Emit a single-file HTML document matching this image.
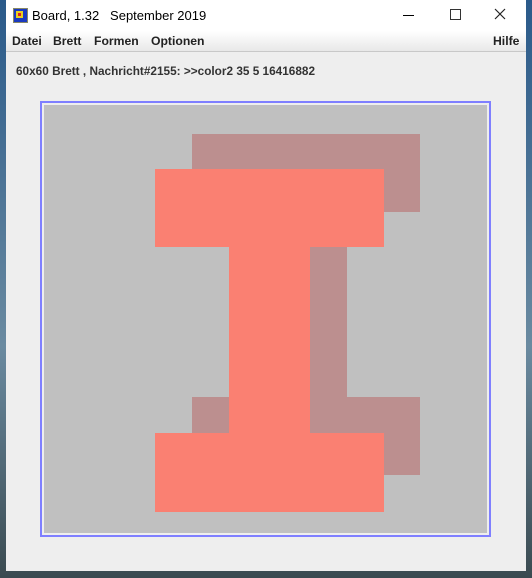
<!DOCTYPE html>
<html><head><style>
body{margin:0;width:532px;height:578px;overflow:hidden;background:linear-gradient(#2a5a8a,#6a8aa0 60%,#3a4a50);position:relative;font-family:"Liberation Sans",sans-serif}
.win{position:absolute;left:6px;top:0;width:520px;height:571px;background:#eeeeee;}
.title{position:absolute;left:0;top:0;width:520px;height:31px;background:#fff;font-size:13px;}
.menu{position:absolute;left:0;top:31px;width:520px;height:20px;background:linear-gradient(#ffffff,#e8e8e8);border-bottom:1px solid #c8c8c8;font-size:12.2px;font-weight:bold;color:#222}
.menu span{position:absolute;top:3px}
.abs{position:absolute}
</style></head><body>
<div class="win">
<div class="title">
 <div class="abs" style="left:7px;top:8px;width:13px;height:13px;background:#1a3ac0;border:1px solid #886"></div>
 <div class="abs" style="left:10px;top:11px;width:7px;height:7px;background:#e8d020"></div>
 <div class="abs" style="left:12px;top:13px;width:3px;height:3px;background:#e02020"></div>
 <div class="abs" style="left:26px;top:8px;color:#000">Board, 1.32&nbsp;&nbsp;&nbsp;September 2019</div>
 <div class="abs" style="left:397px;top:15px;width:11px;height:1px;background:#000"></div>
 <div class="abs" style="left:444px;top:9px;width:9px;height:9px;border:1px solid #333"></div>
 <svg class="abs" style="left:488px;top:8px" width="12" height="12"><path d="M1 1L11 11M11 1L1 11" stroke="#222" stroke-width="1.2"/></svg>
</div>
<div class="menu">
 <span style="left:6px">Datei</span><span style="left:47px">Brett</span><span style="left:88px">Formen</span><span style="left:145px">Optionen</span><span style="left:487px">Hilfe</span>
</div>
<div class="abs" style="left:10px;top:64px;font-size:11.8px;font-weight:bold;color:#333">60x60 Brett , Nachricht#2155: &gt;&gt;color2 35 5 16416882</div>
<div class="abs" style="left:34px;top:101px;width:447px;height:432px;border:2px solid #7f7fff;background:#eeeeee">
 <div class="abs" style="left:2px;top:2px;width:443px;height:428px;background:#c0c0c0;overflow:hidden">
  <div class="abs" style="left:148px;top:29px;width:228px;height:78px;background:#bc8f8f"></div>
  <div class="abs" style="left:222px;top:107px;width:81px;height:186px;background:#bc8f8f"></div>
  <div class="abs" style="left:148px;top:292px;width:228px;height:78px;background:#bc8f8f"></div>
  <div class="abs" style="left:111px;top:64px;width:229px;height:78px;background:#fa8072"></div>
  <div class="abs" style="left:185px;top:142px;width:81px;height:186px;background:#fa8072"></div>
  <div class="abs" style="left:111px;top:328px;width:229px;height:79px;background:#fa8072"></div>
 </div>
</div>
</div>
</body></html>
